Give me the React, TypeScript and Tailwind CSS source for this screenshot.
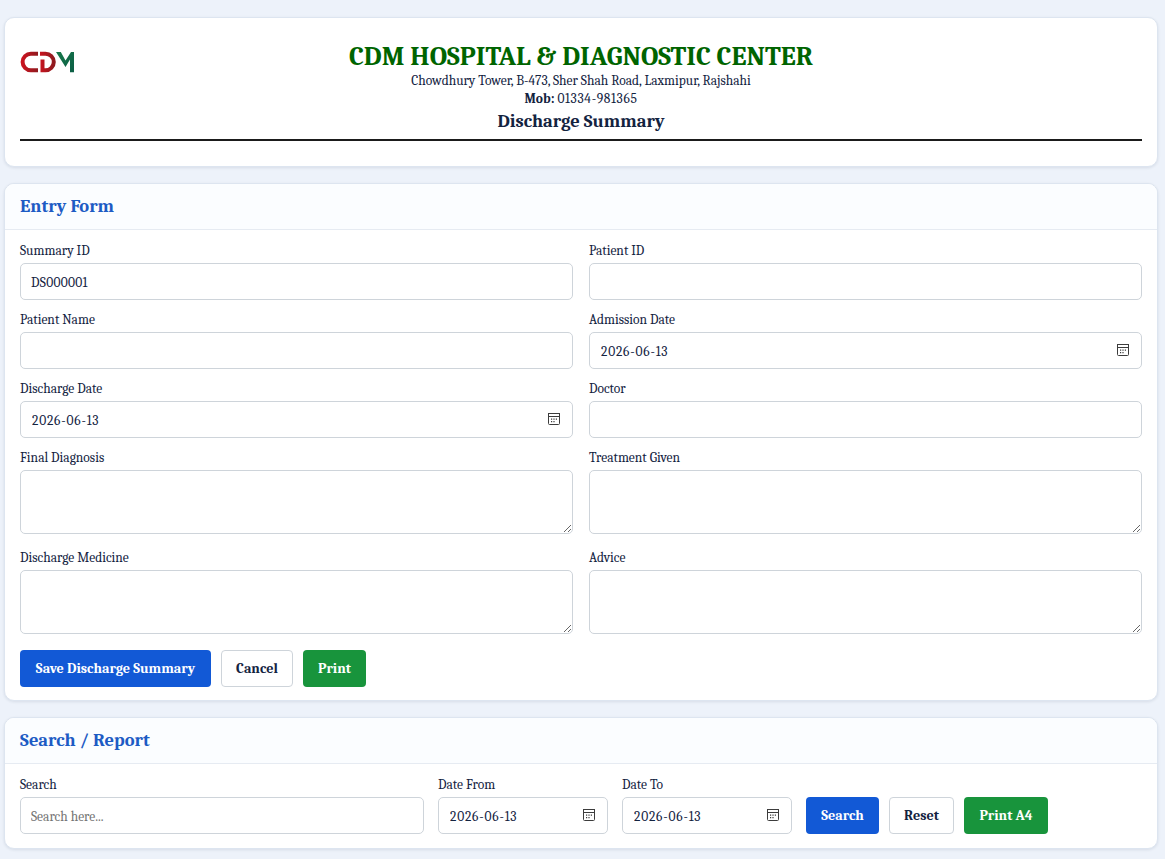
const inputCls =
  'block w-full h-[37px] bg-white border border-[#ced4da] rounded-[5px] px-[10px] pt-[2px] text-[13.5px] text-[#13233f] outline-none placeholder:text-[#757575]';
const areaCls =
  'block w-full h-[64px] mb-1 bg-white border border-[#ced4da] rounded-[5px] px-[10px] py-1.5 text-[13.5px] text-[#13233f] outline-none';
const labelCls = 'block h-[20px] mb-[2px] text-[13.5px] leading-[20px] text-[#13233f]';
const btnCls = 'h-[37px] pt-[1px] rounded-[4px] text-[14.2px] font-bold';
const cardCls = 'bg-white border border-[#dde5f0] rounded-[10px] shadow-[0_1px_3px_rgba(15,35,70,0.1)]';

const Logo = () => (
  <svg width="56" height="24" viewBox="0 0 56 24" className="shrink-0">
    <defs>
      <linearGradient id="red" x1="0" y1="0" x2="1" y2="0">
        <stop offset="0" stopColor="#c8141f" />
        <stop offset="1" stopColor="#8f1a1f" />
      </linearGradient>
      <linearGradient id="green" x1="0" y1="0" x2="1" y2="1">
        <stop offset="0" stopColor="#17794a" />
        <stop offset="1" stopColor="#0b5d45" />
      </linearGradient>
    </defs>
    <path d="M18 3.7 H10.9 A8.3 8.3 0 0 0 10.9 20.3 H18" fill="none" stroke="url(#red)" strokeWidth="4" />
    <path d="M20 3.7 H25.5 A8.3 8.3 0 0 1 25.5 20.3 H22.5 V9.5" fill="none" stroke="url(#red)" strokeWidth="4" />
    <path d="M36 2 H40.8 L45.5 10.5 L51 2 H54 V22.3 H50 V9.5 L45.5 17 Z" fill="url(#green)" />
  </svg>
);

const CalendarIcon = () => (
  <svg width="14" height="14" viewBox="0 0 14 14" className="absolute right-[12px] top-[11px] text-[#3c3c3c]">
    <rect x="1.5" y="1.5" width="11" height="11" rx="1" fill="none" stroke="currentColor" />
    <rect x="1.5" y="1.5" width="11" height="3" fill="none" stroke="currentColor" />
    <path d="M4 6.5 H5.2 V7.7 H4 Z M6.4 6.5 H7.6 V7.7 H6.4 Z M8.8 6.5 H10 V7.7 H8.8 Z M4 9 H5.2 V10.2 H4 Z M6.4 9 H7.6 V10.2 H6.4 Z" fill="currentColor" />
  </svg>
);

const Field = ({ label, value }: { label: string; value?: string }) => (
  <div>
    <label className={labelCls}>{label}</label>
    <input type="text" defaultValue={value} className={`${inputCls} tracking-[0.3px]`} />
  </div>
);

const DateField = ({ label }: { label: string }) => (
  <div>
    <label className={labelCls}>{label}</label>
    <div className="relative">
      <input type="text" defaultValue="2026-06-13" className={`${inputCls} pl-[11px] tracking-[0.8px]`} />
      <CalendarIcon />
    </div>
  </div>
);

const AreaField = ({ label }: { label: string }) => (
  <div>
    <label className={labelCls}>{label}</label>
    <textarea className={areaCls} />
  </div>
);

const CardHead = ({ title }: { title: string }) => (
  <div className="h-[46px] px-[15px] flex items-center bg-[#fbfdff] border-b border-[#e6ebf2]">
    <h2 className="text-[18.5px] font-bold text-[#1d5bc4]">{title}</h2>
  </div>
);

export default function App() {
  return (
    <div
      className="min-h-[859px] bg-[#edf2fa] pl-1 pr-[7px] pt-[17px] flex flex-col gap-4 text-[#13233f]"
      style={{ fontFamily: 'Caladea, Cambria, "Noto Serif", serif' }}
    >
      {/* Header */}
      <div className={`${cardCls} h-[150px] px-[15px] pt-[24px]`}>
        <div className="relative text-center">
          <div className="absolute left-0 top-[8px]">
            <Logo />
          </div>
          <h1 className="text-[26.9px] leading-[30px] font-bold text-[#006400]">CDM HOSPITAL &amp; DIAGNOSTIC CENTER</h1>
          <p className="text-[13.5px] leading-[17px]">Chowdhury Tower, B-473, Sher Shah Road, Laxmipur, Rajshahi</p>
          <p className="text-[13.5px] leading-[17px] mt-[1px]">
            <b>Mob:</b> <span className="tracking-[0.65px]">01334-981365</span>
          </p>
          <h2 className="text-[18.5px] leading-[24px] font-bold mt-[2px]">Discharge Summary</h2>
        </div>
        <hr className="mt-[6px] border-t-2 border-[#1b1b1b]" />
      </div>

      {/* Entry Form */}
      <div className={`${cardCls} h-[518px] overflow-hidden`}>
        <CardHead title="Entry Form" />
        <div className="px-[15px] pt-[11px]">
          <div className="grid grid-cols-2 gap-x-4 gap-y-[10px]">
            <Field label="Summary ID" value="DS000001" />
            <Field label="Patient ID" />
            <Field label="Patient Name" />
            <DateField label="Admission Date" />
            <DateField label="Discharge Date" />
            <Field label="Doctor" />
            <AreaField label="Final Diagnosis" />
            <AreaField label="Treatment Given" />
            <AreaField label="Discharge Medicine" />
            <AreaField label="Advice" />
          </div>
          <div className="flex gap-[10px] mt-3">
            <button className={`${btnCls} w-[191px] bg-[#1259d6] text-white`}>Save Discharge Summary</button>
            <button className={`${btnCls} w-[72px] bg-white border border-[#ced4da]`}>Cancel</button>
            <button className={`${btnCls} w-[63px] bg-[#18943c] text-white`}>Print</button>
          </div>
        </div>
      </div>

      {/* Search / Report */}
      <div className={`${cardCls} h-[132px] overflow-hidden`}>
        <CardHead title="Search / Report" />
        <div className="px-[15px] pt-[11px] flex items-end gap-[14px]">
          <div className="w-[404px]">
            <label className={labelCls}>Search</label>
            <input placeholder="Search here..." className={inputCls} />
          </div>
          <div className="w-[170px]">
            <DateField label="Date From" />
          </div>
          <div className="w-[170px]">
            <DateField label="Date To" />
          </div>
          <div className="flex gap-[10px]">
            <button className={`${btnCls} w-[73px] bg-[#1259d6] text-white`}>Search</button>
            <button className={`${btnCls} w-[65px] bg-white border border-[#ced4da]`}>Reset</button>
            <button className={`${btnCls} w-[84px] bg-[#18943c] text-white`}>Print A4</button>
          </div>
        </div>
      </div>
    </div>
  );
}
